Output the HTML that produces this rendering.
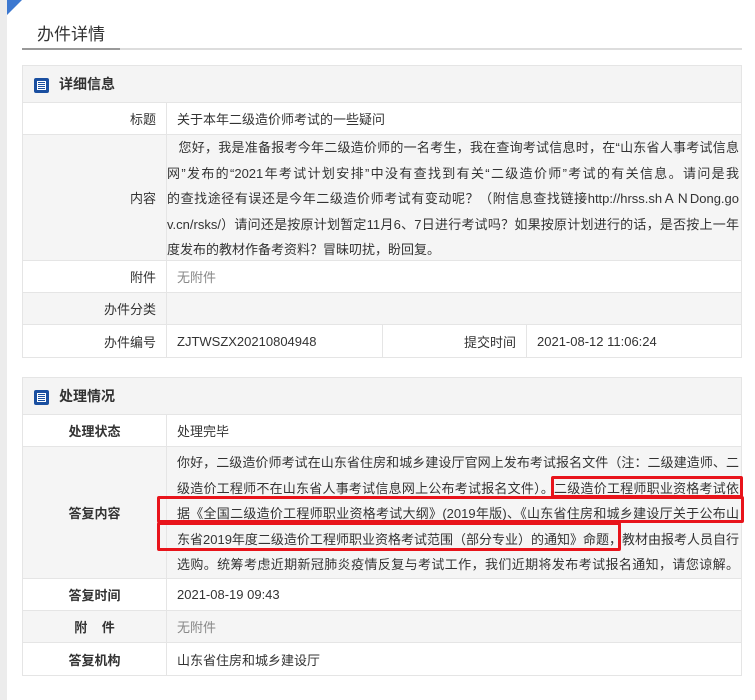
<!DOCTYPE html>
<html><head><meta charset="utf-8">
<style>
*{margin:0;padding:0;box-sizing:border-box}
body{width:755px;height:700px;background:#fff;position:relative;overflow:hidden;font-family:"Liberation Sans","Noto Sans CJK SC",sans-serif;font-size:13px;color:#333}
.strip{position:absolute;left:0;top:0;width:7px;height:700px;background:#ececec}
.tri{position:absolute;left:7px;top:0;width:0;height:0;border-top:15px solid #3c78d0;border-right:15px solid transparent}
.ttl{position:absolute;left:37px;top:20px;font-size:17px;color:#333}
.ul{position:absolute;left:22px;top:48px;width:720px;height:2px;background:#ddd}
.ul b{position:absolute;left:0;top:0;width:98px;height:2px;background:#999}
.box{position:absolute;left:22px;width:720px;border:1px solid #e5e5e5}
.hd{height:37px;background:#f4f4f4;border-bottom:1px solid #e5e5e5;position:relative;font-weight:bold;font-size:14px;line-height:36px;padding-left:36px}
.ic{position:absolute;left:11px;top:12px;width:15px;height:15px;background:#1a4fa0;border-radius:2px}
.ic i{position:absolute;left:3px;top:3px;width:9px;height:9px;background:#fff}
.ic i:before{content:"";position:absolute;left:1px;top:1px;width:7px;height:7px;background:repeating-linear-gradient(#1a4fa0 0 1px,#fff 1px 2px)}
.row{display:flex;border-bottom:1px solid #e5e5e5;position:relative}
.row:last-child{border-bottom:none}
.g{background:#f5f5f5}
.lb{width:144px;border-right:1px solid #e5e5e5;text-align:right;padding-right:10px;display:flex;align-items:center;justify-content:flex-end}
.b2 .lb{justify-content:center;font-weight:bold;padding-right:0}
.v{flex:1;padding-left:10px;display:flex;align-items:center}
.txt{flex:1;padding:0 2px 0 0}
.txt div{height:25.5px;line-height:25.5px;text-align:justify;text-align-last:justify;white-space:nowrap}
.txt div.l{text-align-last:left}
.gray{color:#888}
.red{position:absolute;border:3px solid #e8141b;border-radius:2px}
</style></head><body>
<div class="strip"></div><div class="tri"></div>
<div class="ttl">办件详情</div>
<div class="ul"><b></b></div>

<div class="box" style="top:65px">
 <div class="hd"><span class="ic"><i></i></span>详细信息</div>
 <div class="row" style="height:32px"><div class="lb">标题</div><div class="v">关于本年二级造价师考试的一些疑问</div></div>
 <div class="row g" style="height:126px"><div class="lb">内容</div><div class="txt">
  <div>&nbsp;&nbsp;&nbsp;您好，我是准备报考今年二级造价师的一名考生，我在查询考试信息时，在“山东省人事考试信息</div>
  <div>网”发布的“2021年考试计划安排”中没有查找到有关“二级造价师”考试的有关信息。请问是我</div>
  <div>的查找途径有误还是今年二级造价师考试有变动呢？（附信息查找链接http://hrss.shＡＮDong.go</div>
  <div>v.cn/rsks/）请问还是按原计划暂定11月6、7日进行考试吗？如果按原计划进行的话，是否按上一年</div>
  <div class="l">度发布的教材作备考资料？冒昧叨扰，盼回复。</div>
 </div></div>
 <div class="row" style="height:32px"><div class="lb">附件</div><div class="v gray">无附件</div></div>
 <div class="row g" style="height:32px"><div class="lb">办件分类</div><div class="v"></div></div>
 <div class="row" style="height:32px"><div class="lb">办件编号</div><div class="v" style="flex:0 0 216px;border-right:1px solid #e5e5e5">ZJTWSZX20210804948</div><div class="lb" style="width:144px">提交时间</div><div class="v">2021-08-12 11:06:24</div></div>
</div>

<div class="box b2" style="top:377px">
 <div class="hd"><span class="ic"><i></i></span>处理情况</div>
 <div class="row" style="height:32px"><div class="lb">处理状态</div><div class="v">处理完毕</div></div>
 <div class="row g" style="height:132px"><div class="lb">答复内容</div><div class="txt" style="padding:3px 2px 0 10px">
  <div>你好，二级造价师考试在山东省住房和城乡建设厅官网上发布考试报名文件（注：二级建造师、二</div>
  <div>级造价工程师不在山东省人事考试信息网上公布考试报名文件）。二级造价工程师职业资格考试依</div>
  <div>据《全国二级造价工程师职业资格考试大纲》(2019年版)、《山东省住房和城乡建设厅关于公布山</div>
  <div>东省2019年度二级造价工程师职业资格考试范围（部分专业）的通知》命题，教材由报考人员自行</div>
  <div>选购。统筹考虑近期新冠肺炎疫情反复与考试工作，我们近期将发布考试报名通知，请您谅解。</div>
 </div></div>
 <div class="row" style="height:32px"><div class="lb">答复时间</div><div class="v">2021-08-19 09:43</div></div>
 <div class="row g" style="height:32px"><div class="lb">附&nbsp;&nbsp;&nbsp;&nbsp;件</div><div class="v gray">无附件</div></div>
 <div class="row" style="height:32px"><div class="lb">答复机构</div><div class="v">山东省住房和城乡建设厅</div></div>
</div>

<div class="red" style="left:551px;top:476px;width:192px;height:22px"></div>
<div class="red" style="left:157px;top:496px;width:587px;height:27px"></div>
<div class="red" style="left:157px;top:522px;width:464px;height:29px"></div>
</body></html>
